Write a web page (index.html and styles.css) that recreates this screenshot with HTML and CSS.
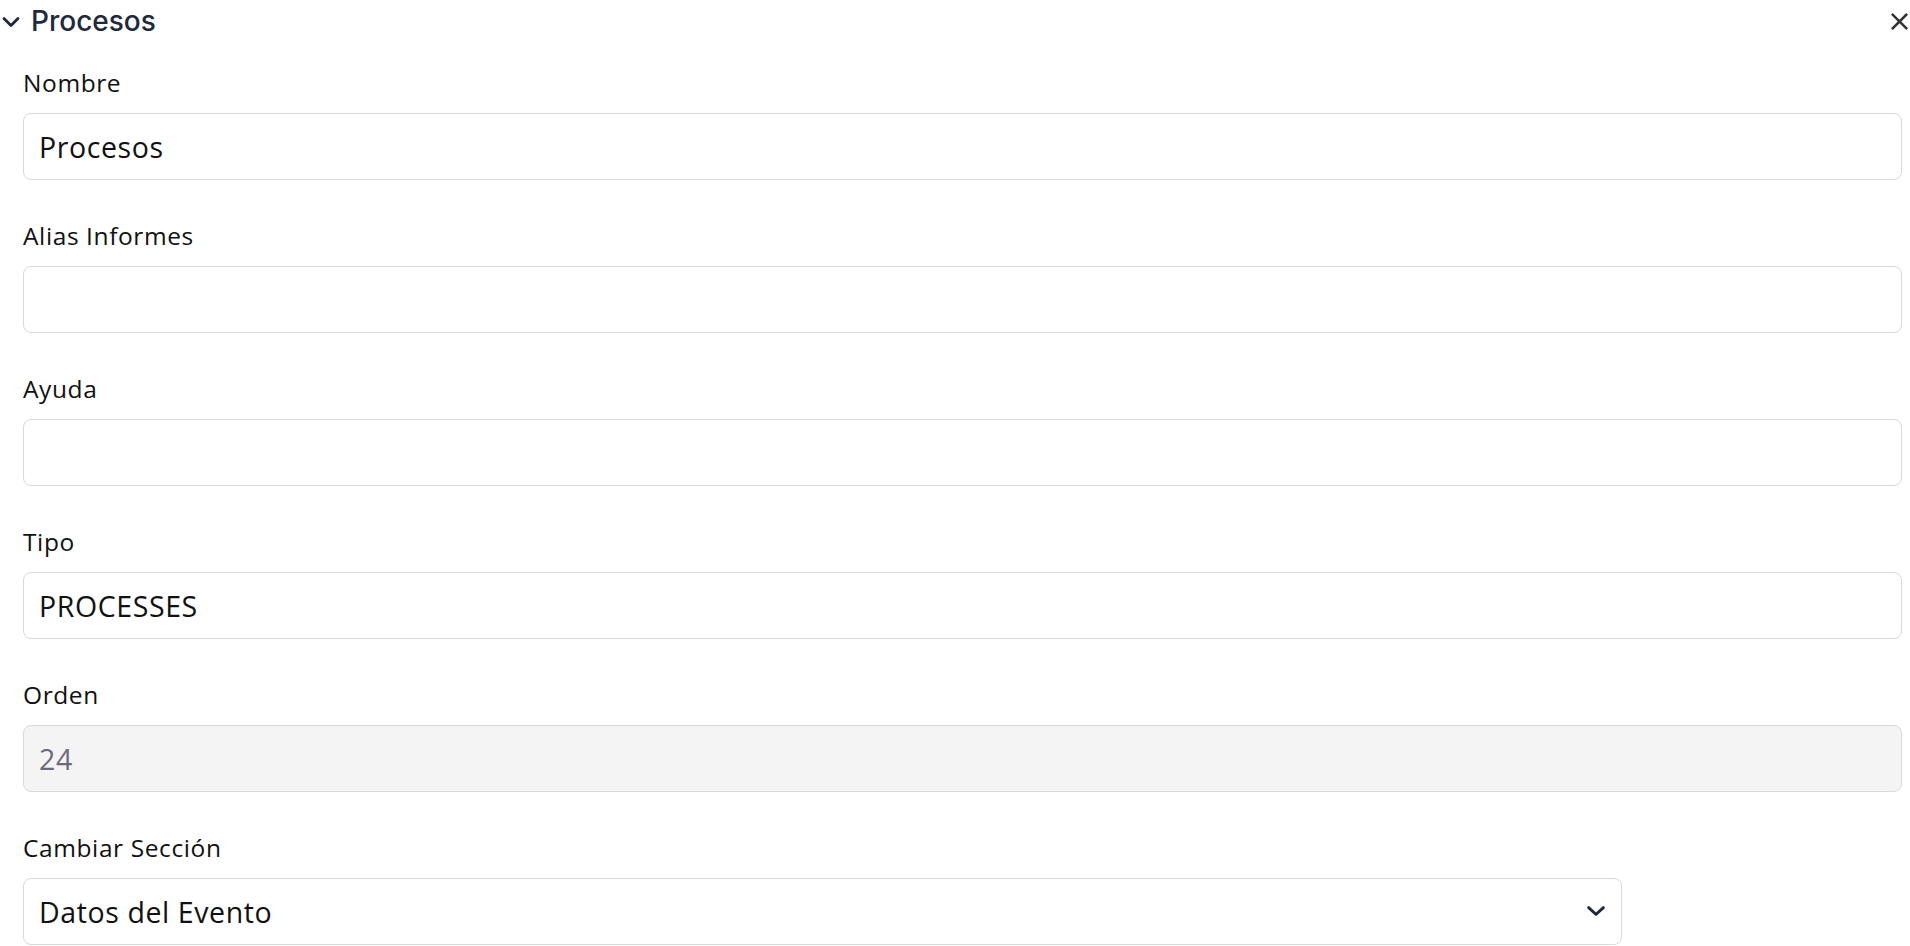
FILE: index.html
```html
<!DOCTYPE html>
<html lang="es">
<head>
<meta charset="utf-8">
<title>Procesos</title>
<link rel="stylesheet" href="styles.css">
</head>
<body>
<div class="panel">
  <div class="panel-header">
    <div class="panel-title">
      <svg class="icon-chevron" width="18" height="12" viewBox="0 0 18 12"><path d="M2 2.4 L9 9.6 L16 2.4" fill="none" stroke="#1e293b" stroke-width="2.8" stroke-linecap="round" stroke-linejoin="round"/></svg>
      <span class="title-text">Procesos</span>
    </div>
    <svg class="icon-close" width="17" height="17" viewBox="0 0 17 17"><path d="M1.8 1.8 L15.2 15.2 M15.2 1.8 L1.8 15.2" fill="none" stroke="#333" stroke-width="2.6" stroke-linecap="square"/></svg>
  </div>
  <form class="panel-body">
    <div class="field">
      <label class="field-label">Nombre</label>
      <input class="field-input" type="text" value="Procesos">
    </div>
    <div class="field">
      <label class="field-label">Alias Informes</label>
      <input class="field-input" type="text" value="">
    </div>
    <div class="field">
      <label class="field-label">Ayuda</label>
      <input class="field-input" type="text" value="">
    </div>
    <div class="field">
      <label class="field-label">Tipo</label>
      <input class="field-input" type="text" value="PROCESSES">
    </div>
    <div class="field">
      <label class="field-label">Orden</label>
      <input class="field-input is-disabled" type="text" value="24" disabled>
    </div>
    <div class="field">
      <label class="field-label">Cambiar Sección</label>
      <div class="select-wrap">
        <select class="field-input field-select">
          <option>Datos del Evento</option>
        </select>
        <svg class="select-chevron" width="18" height="10" viewBox="0 0 18 10"><path d="M1.6 1.6 L9 8.4 L16.4 1.6" fill="none" stroke="#1e293b" stroke-width="2.8" stroke-linecap="round" stroke-linejoin="round"/></svg>
      </div>
    </div>
  </form>
</div>
</body>
</html>
```
FILE: styles.css
```css
html, body {
  margin: 0;
  padding: 0;
  background: #ffffff;
}

body {
  font-family: "Open Sans", "Liberation Sans", sans-serif;
  color: #111111;
  overflow: hidden;
}

.panel {
  display: flex;
  flex-direction: column;
}

.panel-header {
  height: 42px;
  display: flex;
  align-items: center;
  justify-content: space-between;
  padding: 0 2px 0 2px;
}

.panel-title {
  display: flex;
  align-items: center;
  gap: 11px;
}

.icon-chevron {
  display: block;
  margin-top: 1px;
}

.title-text {
  font-family: "Inter", "Liberation Sans", sans-serif;
  font-size: 28px;
  font-weight: 500;
  line-height: 42px;
  color: #1e293b;
}

.icon-close {
  display: block;
}

.panel-body {
  display: flex;
  flex-direction: column;
  padding: 24px 8px 0 23px;
  margin: 0;
}

.field {
  display: flex;
  flex-direction: column;
  margin-bottom: 39px;
}

.field-label {
  display: block;
  font-size: 24.5px;
  line-height: 34px;
  letter-spacing: 0.6px;
  margin-bottom: 13px;
  color: #111111;
}

.field-input {
  box-sizing: border-box;
  width: 100%;
  height: 67px;
  margin: 0;
  padding: 0 15px;
  border: 1.3px solid #d3dbdb;
  border-radius: 8px;
  background: #ffffff;
  font-family: "Open Sans", "Liberation Sans", sans-serif;
  font-size: 28.5px;
  letter-spacing: 0.6px;
  color: #111111;
  outline: none;
}

.field-input.is-disabled {
  background: #f4f4f4;
  color: #6c6a7a;
  -webkit-text-fill-color: #6c6a7a;
  opacity: 1;
}

.select-wrap {
  position: relative;
  width: 85.1%;
}

.field-select {
  appearance: none;
  -webkit-appearance: none;
  padding-right: 50px;
}

.select-chevron {
  position: absolute;
  right: 17px;
  top: 28px;
  pointer-events: none;
}
```
